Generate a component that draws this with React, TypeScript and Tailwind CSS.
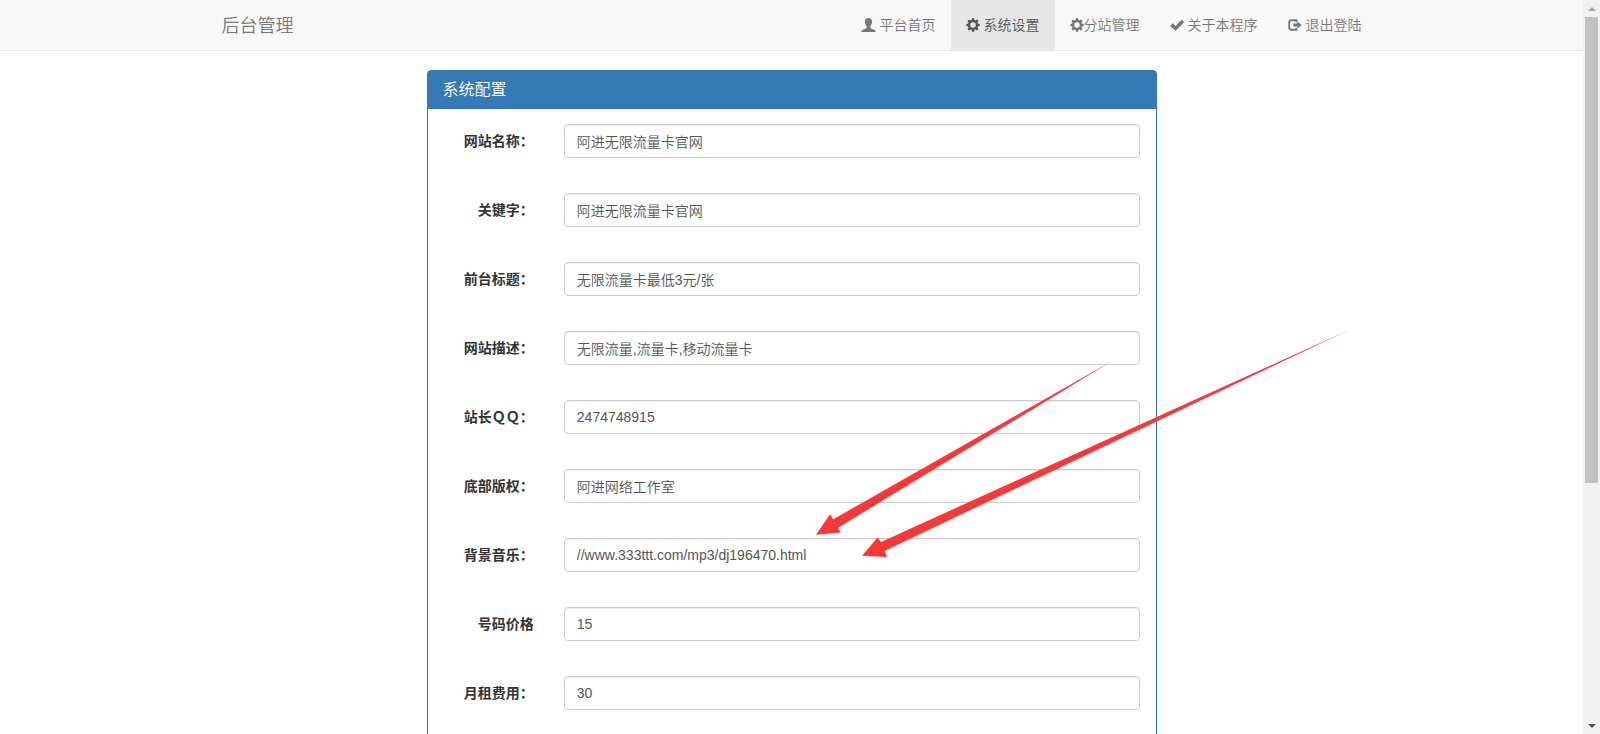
import type { ReactNode } from 'react'

function UserIcon() {
  return (
    <svg viewBox="0 0 15 14" className="w-[15px] h-3.5" fill="currentColor" aria-hidden="true">
      <path d="M7.5 0C5.2 0 4 1.500 4 3.500c0 .5-.2.6-.2 1.100 0 .6.4.700.6 1.300.3 1 .8 1.800 1.300 2.300v1.300c0 .5-.3.700-.9 1L1.600 12C.6 12.500.3 13 .3 14h14.400c0-1-.3-1.500-1.300-2L10.200 10.500c-.6-.3-.9-.5-.9-1V8.200c.5-.5 1-1.300 1.300-2.300.2-.6.6-.7.6-1.300 0-.5-.2-.6-.2-1.100C11 1.500 9.800 0 7.500 0z" />
    </svg>
  )
}

function CogIcon() {
  return (
    <svg viewBox="-7 -7 14 14" className="size-3.5" aria-hidden="true">
      <circle r="3.900" fill="none" stroke="currentColor" strokeWidth="2.300" />
      <g fill="currentColor">
        {[0, 45, 90, 135, 180, 225, 270, 315].map((angle) => (
          <path key={angle} d="M-1.600-4.300L-1.100-6.700H1.100L1.600-4.300z" transform={`rotate(${angle})`} />
        ))}
      </g>
    </svg>
  )
}

function OkIcon() {
  return (
    <svg viewBox="0 0 14 14" className="size-3.5" fill="currentColor" aria-hidden="true">
      <path d="M.3 7.700L2.500 5.400q.3-.3.600 0L5.600 7.900 11.300 1.900q.3-.3.600 0L13.800 3.800q.3.300 0 .600L5.900 12.500q-.3.300-.6 0L.3 8.300q-.3-.3 0-.6z" />
    </svg>
  )
}

function LogOutIcon() {
  return (
    <svg viewBox="0 0 15 14" className="w-3.5 h-3.5 overflow-visible" aria-hidden="true">
      <path d="M9 1.900H3.600Q1.300 1.900 1.300 4.200V9.800Q1.300 12.100 3.600 12.100H9V10.300" fill="none" stroke="currentColor" strokeWidth="2" />
      <path d="M9 1v2.800" fill="none" stroke="currentColor" strokeWidth="2" />
      <path d="M9.800 3.200L14.800 7 9.800 10.800V8.500H5.700V5.500h4.100z" fill="currentColor" />
    </svg>
  )
}

type NavItem = { label: string; icon: ReactNode; active?: boolean; tight?: boolean }

const navItems: NavItem[] = [
  { label: '平台首页', icon: <UserIcon /> },
  { label: '系统设置', icon: <CogIcon />, active: true },
  { label: '分站管理', icon: <CogIcon />, tight: true },
  { label: '关于本程序', icon: <OkIcon /> },
  { label: '退出登陆', icon: <LogOutIcon /> },
]

const fields = [
  { id: 'sitename', label: '网站名称：', value: '阿进无限流量卡官网' },
  { id: 'keywords', label: '关键字：', value: '阿进无限流量卡官网' },
  { id: 'title', label: '前台标题：', value: '无限流量卡最低3元/张' },
  { id: 'description', label: '网站描述：', value: '无限流量,流量卡,移动流量卡' },
  { id: 'qq', label: '站长ＱＱ：', value: '2474748915' },
  { id: 'copyright', label: '底部版权：', value: '阿进网络工作室' },
  { id: 'music', label: '背景音乐：', value: '//www.333ttt.com/mp3/dj196470.html' },
  { id: 'price', label: '号码价格', value: '15' },
  { id: 'rent', label: '月租费用：', value: '30' },
]

function Navbar() {
  return (
    <header className="bg-[#f8f8f8] border-b border-[#e7e7e7]">
      <div className="max-w-[1170px] mx-auto flex items-center justify-between">
        <a href="#" className="px-[15px] pt-0.5 text-lg leading-5 text-[#777]">后台管理</a>
        <nav>
          <ul className="flex">
            {navItems.map((item) => (
              <li key={item.label}>
                <a
                  href="#"
                  className={`flex items-center h-[50px] px-[15px] ${item.tight ? '' : 'gap-1'} ${item.active ? 'bg-[#e7e7e7] text-[#555]' : 'text-[#777]'}`}
                >
                  {item.icon}
                  <span>{item.label}</span>
                </a>
              </li>
            ))}
          </ul>
        </nav>
      </div>
    </header>
  )
}

function Arrows() {
  return (
    <svg
      width="930"
      height="500"
      viewBox="427 70 930 500"
      className="absolute top-0 left-0 max-w-none pointer-events-none"
      fill="#fb3838"
      aria-hidden="true"
    >
      <path d="M816 534.700L830 514.300 833.300 519.200 1112 361 838 527.700 840.700 532.500z" />
      <path d="M862 555.700L877.700 537.300 881 541.900 1350 329.500 885 550.700 886.700 557z" />
    </svg>
  )
}

function SettingsPanel() {
  return (
    <section className="relative w-full max-w-[730px] mx-auto mt-[19px]">
      <div className="border border-[#337ab7] rounded bg-white">
        <h3 className="bg-[#337ab7] text-white text-base leading-[18px] px-[15px] py-2.5">系统配置</h3>
        <form className="pt-[15px] pb-20 flex flex-col gap-[35px]">
          {fields.map((field) => (
            <div key={field.id} className="flex">
              <label htmlFor={field.id} className="w-1/6 pr-[15px] pt-[7px] text-right font-bold text-[#333]">
                {field.label}
              </label>
              <div className="w-5/6 px-[15px]">
                <input
                  id={field.id}
                  type="text"
                  defaultValue={field.value}
                  className="block w-full h-[34px] px-3 py-1.5 text-[#555] border border-[#ccc] rounded shadow-[inset_0_1px_1px_rgba(0,0,0,0.075)]"
                />
              </div>
            </div>
          ))}
        </form>
      </div>
      <Arrows />
    </section>
  )
}

function ScrollBar() {
  return (
    <div className="w-[17px] shrink-0 bg-[#f1f1f1] flex flex-col">
      <button type="button" aria-label="向上滚动" className="h-[17px] flex items-center justify-center">
        <svg viewBox="0 0 8 4" className="w-2 h-1" fill="#a3a3a3"><path d="M0 4L4 0 8 4z" /></svg>
      </button>
      <div className="flex-1 px-0.5">
        <div className="h-[66.5%] bg-[#c1c1c1]" />
      </div>
      <button type="button" aria-label="向下滚动" className="h-[17px] flex items-center justify-center">
        <svg viewBox="0 0 8 4" className="w-2 h-1" fill="#505050"><path d="M0 0L4 4 8 0z" /></svg>
      </button>
    </div>
  )
}

export default function App() {
  return (
    <div className="flex h-screen overflow-hidden bg-white text-sm leading-5 font-[350] font-['Liberation_Sans','Noto_Sans_CJK_SC',sans-serif]">
      <main className="flex-1 min-w-0 overflow-hidden">
        <Navbar />
        <SettingsPanel />
      </main>
      <ScrollBar />
    </div>
  )
}
